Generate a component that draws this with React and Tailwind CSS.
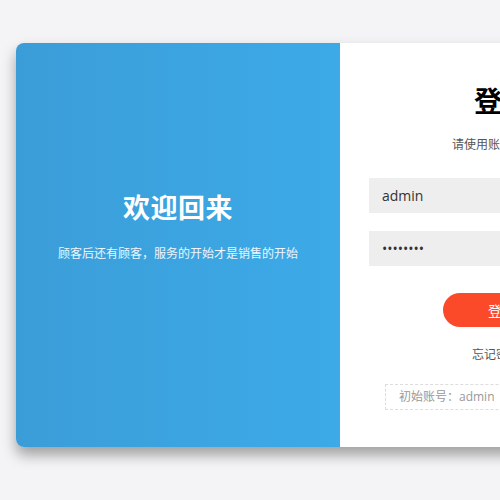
import React from 'react'

const font = { fontFamily: '"Open Sans", "Noto Sans CJK SC", sans-serif' }

const WelcomePanel = () => (
	<div className="w-[324px] shrink-0 h-full flex flex-col items-center pt-[151px] text-white bg-gradient-to-r from-[#3b9dd8] to-[#3caae8]">
		<div className="text-[27px] leading-none font-bold tracking-[0.5px]">欢迎回来</div>
		<div className="mt-[25px] text-[12px] leading-4 text-white/90">顾客后还有顾客，服务的开始才是销售的开始</div>
	</div>
)

const LoginForm = () => (
	<div className="w-[324px] shrink-0 h-full bg-white flex flex-col items-center pt-[44px]">
		<div className="text-[28px] leading-none font-bold text-black">登录</div>
		<div className="mt-[22px] text-[12px] leading-4 text-[#555] pl-[8px]">请使用账号密码登录</div>
		<input
			className="mt-[25px] w-[266px] h-[35px] bg-[#eeeeee] px-[13px] text-[14px] text-[#333] outline-none"
			style={font}
			defaultValue="admin"
		/>
		<input
			type="password"
			className="mt-[18px] w-[266px] h-[35px] bg-[#eeeeee] px-[13px] text-[14px] text-[#333] outline-none"
			style={font}
			defaultValue="12345678"
		/>
		<button className="mt-[27px] w-[118px] h-[34px] rounded-full bg-[#fb4a2a] text-white text-[14px]">登录</button>
		<div className="mt-[20px] text-[12px] leading-4 text-[#555]">忘记密码？</div>
		<div className="mt-[21px] w-[234px] h-[26px] border border-dashed border-[#dddddd] flex items-center px-[13px] text-[12px] text-[#999] whitespace-nowrap">
			<span>初始账号：admin</span>
			<span className="ml-[5px] text-[#fbb08a]">|</span>
			<span className="ml-[8px]">初始密码：123456</span>
		</div>
	</div>
)

export default function App() {
	return (
		<div className="w-[500px] h-[500px] overflow-hidden bg-[#f4f4f6] pt-[43px] pl-[16px]" style={font}>
			<div className="flex w-[648px] h-[404px] rounded-lg overflow-hidden shadow-[0_8px_14px_rgba(0,0,0,0.35)]">
				<WelcomePanel />
				<LoginForm />
			</div>
		</div>
	)
}
